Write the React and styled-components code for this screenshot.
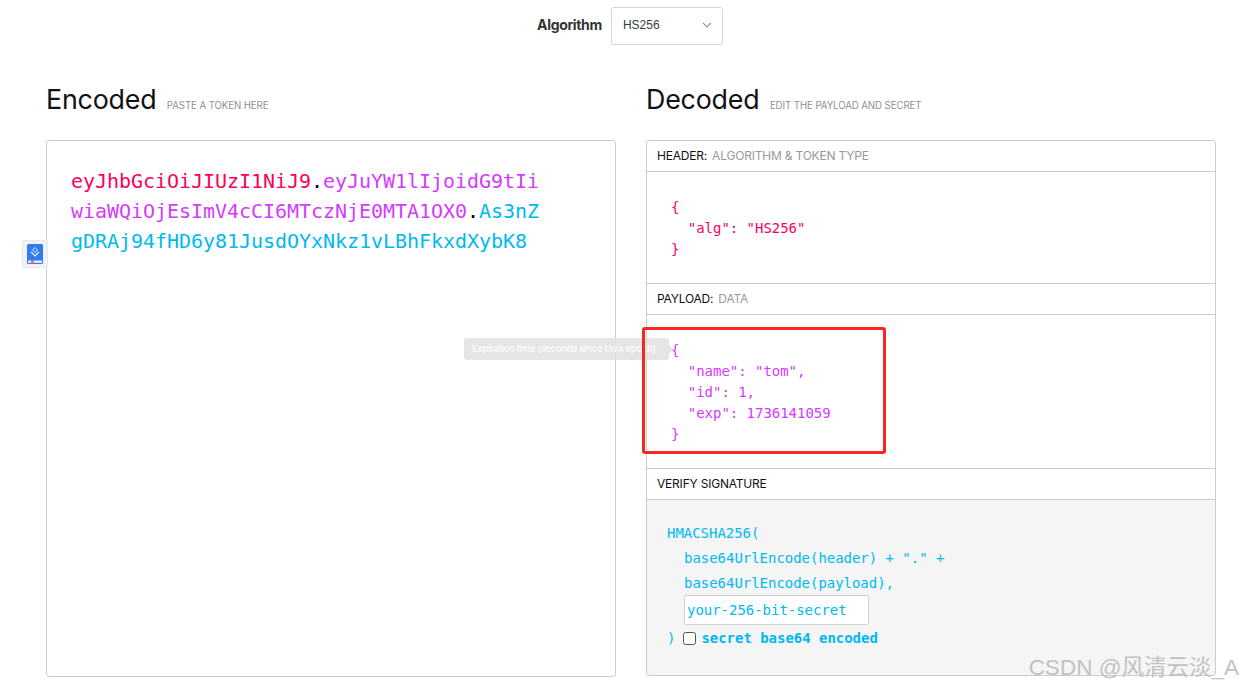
import styled, { createGlobalStyle } from "styled-components";

const mono = `"DejaVu Sans Mono", "Liberation Mono", monospace`;
const sans = `Inter, "Liberation Sans", sans-serif`;

const GlobalStyle = createGlobalStyle`
  html, body {
    margin: 0;
    padding: 0;
    background: #fff;
    overflow: hidden;
  }
  body {
    font-family: ${sans};
  }
`;

const Page = styled.div`
  position: relative;
  width: 1242px;
  height: 686px;
  overflow: hidden;
`;

const AlgorithmBar = styled.div`
  display: flex;
  justify-content: center;
  align-items: center;
  gap: 9px;
  padding: 7px 0 0 18px;
  height: 38px;
`;

const AlgorithmLabel = styled.span`
  font-size: 14px;
  font-weight: 700;
  color: #333;
  letter-spacing: -0.35px;
  margin-bottom: 4px;
`;

const AlgorithmSelect = styled.div`
  box-sizing: border-box;
  width: 112px;
  height: 38px;
  border: 1px solid #d6d6d6;
  border-radius: 3px;
  display: flex;
  align-items: center;
  justify-content: space-between;
  padding: 0 10px 2px 11px;
  font-family: "Liberation Sans", sans-serif;
  font-size: 12px;
  color: #333c4a;
`;

const Columns = styled.div`
  display: grid;
  grid-template-columns: 570px 570px;
  gap: 30px;
  padding: 0 26px 0 46px;
  margin-top: 36px;
`;

const Column = styled.section`
  display: flex;
  flex-direction: column;
`;

const TitleRow = styled.div`
  display: flex;
  align-items: baseline;
  gap: 10.5px;
  height: 59px;
`;

const Title = styled.h2`
  margin: 0;
  font-size: 26.8px;
  line-height: 36px;
  font-weight: 400;
  color: #111;
  letter-spacing: -0.2px;
`;

const Subtitle = styled.span`
  font-size: 9.7px;
  color: #8f8f8f;
  letter-spacing: -0.1px;
`;

const EncodedPanel = styled.div`
  box-sizing: border-box;
  height: 537px;
  border: 1px solid #ccc;
  border-radius: 3px;
  padding: 25px 70px 24px 24px;
  font-family: ${mono};
  font-size: 20px;
  letter-spacing: -0.04px;
  line-height: 30px;
  word-break: break-all;
`;

const Token = styled.span`
  color: ${(p) => p.$color};
`;

const DecodedPanel = styled.div`
  box-sizing: border-box;
  height: 536px;
  border: 1px solid #ccc;
  border-radius: 3px;
  display: flex;
  flex-direction: column;
`;

const SectionTab = styled.div`
  box-sizing: border-box;
  height: 31px;
  flex: none;
  display: flex;
  align-items: center;
  gap: 5px;
  padding: 0 0 1px 10px;
  font-size: 12px;
  letter-spacing: -0.2px;
  color: #111;
  border-bottom: 1px solid #ccc;
`;

const TabNote = styled.span`
  color: #999;
`;

const CodeBlock = styled.pre`
  box-sizing: border-box;
  margin: 0;
  flex: none;
  height: ${(p) => p.$height}px;
  padding: 25px 0 0 24px;
  font-family: ${mono};
  font-size: 14px;
  letter-spacing: -0.03px;
  line-height: 21px;
  color: ${(p) => p.$color};
  border-bottom: 1px solid #ccc;
`;

const SignatureBlock = styled.div`
  flex: 1;
  background: #f5f5f5;
  padding: 21px 20px 0;
  font-family: ${mono};
  font-size: 14px;
  letter-spacing: -0.03px;
  line-height: 25px;
  color: #00b9f1;
  border-radius: 0 0 3px 3px;
`;

const SignatureLine = styled.div`
  padding-left: ${(p) => (p.$indent ? 17 : 0)}px;
  white-space: pre;
`;

const SecretInput = styled.div`
  box-sizing: border-box;
  width: 185px;
  height: 30px;
  margin: -1px 0 0 17px;
  padding-left: 2px;
  line-height: 28px;
  background: #fff;
  border: 1px solid #d0d0d0;
  border-radius: 2px;
`;

const EncodedRow = styled.div`
  display: flex;
  align-items: center;
  gap: 5px;
  margin-top: 3px;
  line-height: 21px;
`;

const CheckBox = styled.span`
  box-sizing: border-box;
  width: 13px;
  height: 13px;
  margin-left: 3px;
  background: #fff;
  border: 1px solid #555;
  border-radius: 2.5px;
`;

const BoldText = styled.b`
  font-weight: 700;
`;

const FloatingButton = styled.div`
  position: absolute;
  left: 22px;
  top: 240px;
  width: 26px;
  height: 28px;
  box-sizing: border-box;
  background: #f0f2f7;
  border: 1px solid #e6e8ee;
  border-radius: 2px;
  display: flex;
  align-items: center;
  justify-content: center;
`;

const HintBubble = styled.div`
  position: absolute;
  left: 464px;
  top: 338px;
  width: 205px;
  height: 22px;
  box-sizing: border-box;
  padding-left: 8px;
  line-height: 22px;
  background: rgba(224, 224, 224, 0.85);
  border-radius: 3px;
  font-size: 9.3px;
  font-weight: 600;
  letter-spacing: -0.25px;
  color: #fafafa;
  white-space: nowrap;
  &::after {
    content: "";
    position: absolute;
    right: -4px;
    top: 6px;
    border-left: 4px solid rgba(224, 224, 224, 0.85);
    border-top: 5px solid transparent;
    border-bottom: 5px solid transparent;
  }
`;

const RedMark = styled.div`
  position: absolute;
  left: 642px;
  top: 327px;
  width: 244px;
  height: 127px;
  box-sizing: border-box;
  border: 3px solid #f8281e;
  border-radius: 3px;
`;

const Watermark = styled.div`
  position: absolute;
  right: 3px;
  bottom: 6px;
  font-family: "Liberation Sans", "Noto Sans CJK SC", sans-serif;
  font-size: 22.5px;
  line-height: 24px;
  color: #c2c2c2;
  white-space: nowrap;
`;

const Chevron = () => (
  <svg width="10" height="6" viewBox="0 0 10 6" fill="none" stroke="#8a8f96" strokeWidth="1.1">
    <path d="M1 .8 5 5l4-4.2" />
  </svg>
);

const BookIcon = () => (
  <svg width="16" height="20" viewBox="0 0 16 20">
    <rect x="0" y="0" width="16" height="20" rx="1.5" fill="#2f7cf0" />
    <rect x="1" y="16.5" width="14" height="2.5" fill="#dfeafc" />
    <rect x="4" y="16" width="3" height="3.5" fill="#f2687a" />
    <path d="M8 3.5 10.5 6 8 8.5 5.5 6Z" fill="none" stroke="#e6f0ff" strokeWidth="1" />
    <path d="M4 8 8 12l4-4" fill="none" stroke="#e6f0ff" strokeWidth="1.2" />
  </svg>
);

const App = () => {
  return (
    <Page>
      <GlobalStyle />
      <AlgorithmBar>
        <AlgorithmLabel>Algorithm</AlgorithmLabel>
        <AlgorithmSelect>
          HS256
          <Chevron />
        </AlgorithmSelect>
      </AlgorithmBar>

      <Columns>
        <Column>
          <TitleRow>
            <Title>Encoded</Title>
            <Subtitle>PASTE A TOKEN HERE</Subtitle>
          </TitleRow>
          <EncodedPanel>
            <Token $color="#fb015b">eyJhbGciOiJIUzI1NiJ9</Token>
            <Token $color="#000">.</Token>
            <Token $color="#d63aff">eyJuYW1lIjoidG9tIiwiaWQiOjEsImV4cCI6MTczNjE0MTA1OX0</Token>
            <Token $color="#000">.</Token>
            <Token $color="#00b9f1">As3nZgDRAj94fHD6y81JusdOYxNkz1vLBhFkxdXybK8</Token>
          </EncodedPanel>
        </Column>

        <Column>
          <TitleRow>
            <Title>Decoded</Title>
            <Subtitle>EDIT THE PAYLOAD AND SECRET</Subtitle>
          </TitleRow>
          <DecodedPanel>
            <SectionTab>
              HEADER: <TabNote>ALGORITHM &amp; TOKEN TYPE</TabNote>
            </SectionTab>
            <CodeBlock $height={112} $color="#fb015b">{`{
  "alg": "HS256"
}`}</CodeBlock>
            <SectionTab>
              PAYLOAD: <TabNote>DATA</TabNote>
            </SectionTab>
            <CodeBlock $height={154} $color="#d63aff">{`{
  "name": "tom",
  "id": 1,
  "exp": 1736141059
}`}</CodeBlock>
            <SectionTab>VERIFY SIGNATURE</SectionTab>
            <SignatureBlock>
              <SignatureLine>HMACSHA256(</SignatureLine>
              <SignatureLine $indent>base64UrlEncode(header) + "." +</SignatureLine>
              <SignatureLine $indent>base64UrlEncode(payload),</SignatureLine>
              <SecretInput>your-256-bit-secret</SecretInput>
              <EncodedRow>
                )
                <CheckBox />
                <BoldText>secret base64 encoded</BoldText>
              </EncodedRow>
            </SignatureBlock>
          </DecodedPanel>
        </Column>
      </Columns>

      <FloatingButton>
        <BookIcon />
      </FloatingButton>
      <HintBubble>Expiration time (seconds since Unix epoch)</HintBubble>
      <RedMark />
      <Watermark>CSDN @风清云淡_A</Watermark>
    </Page>
  );
};

export default App;
